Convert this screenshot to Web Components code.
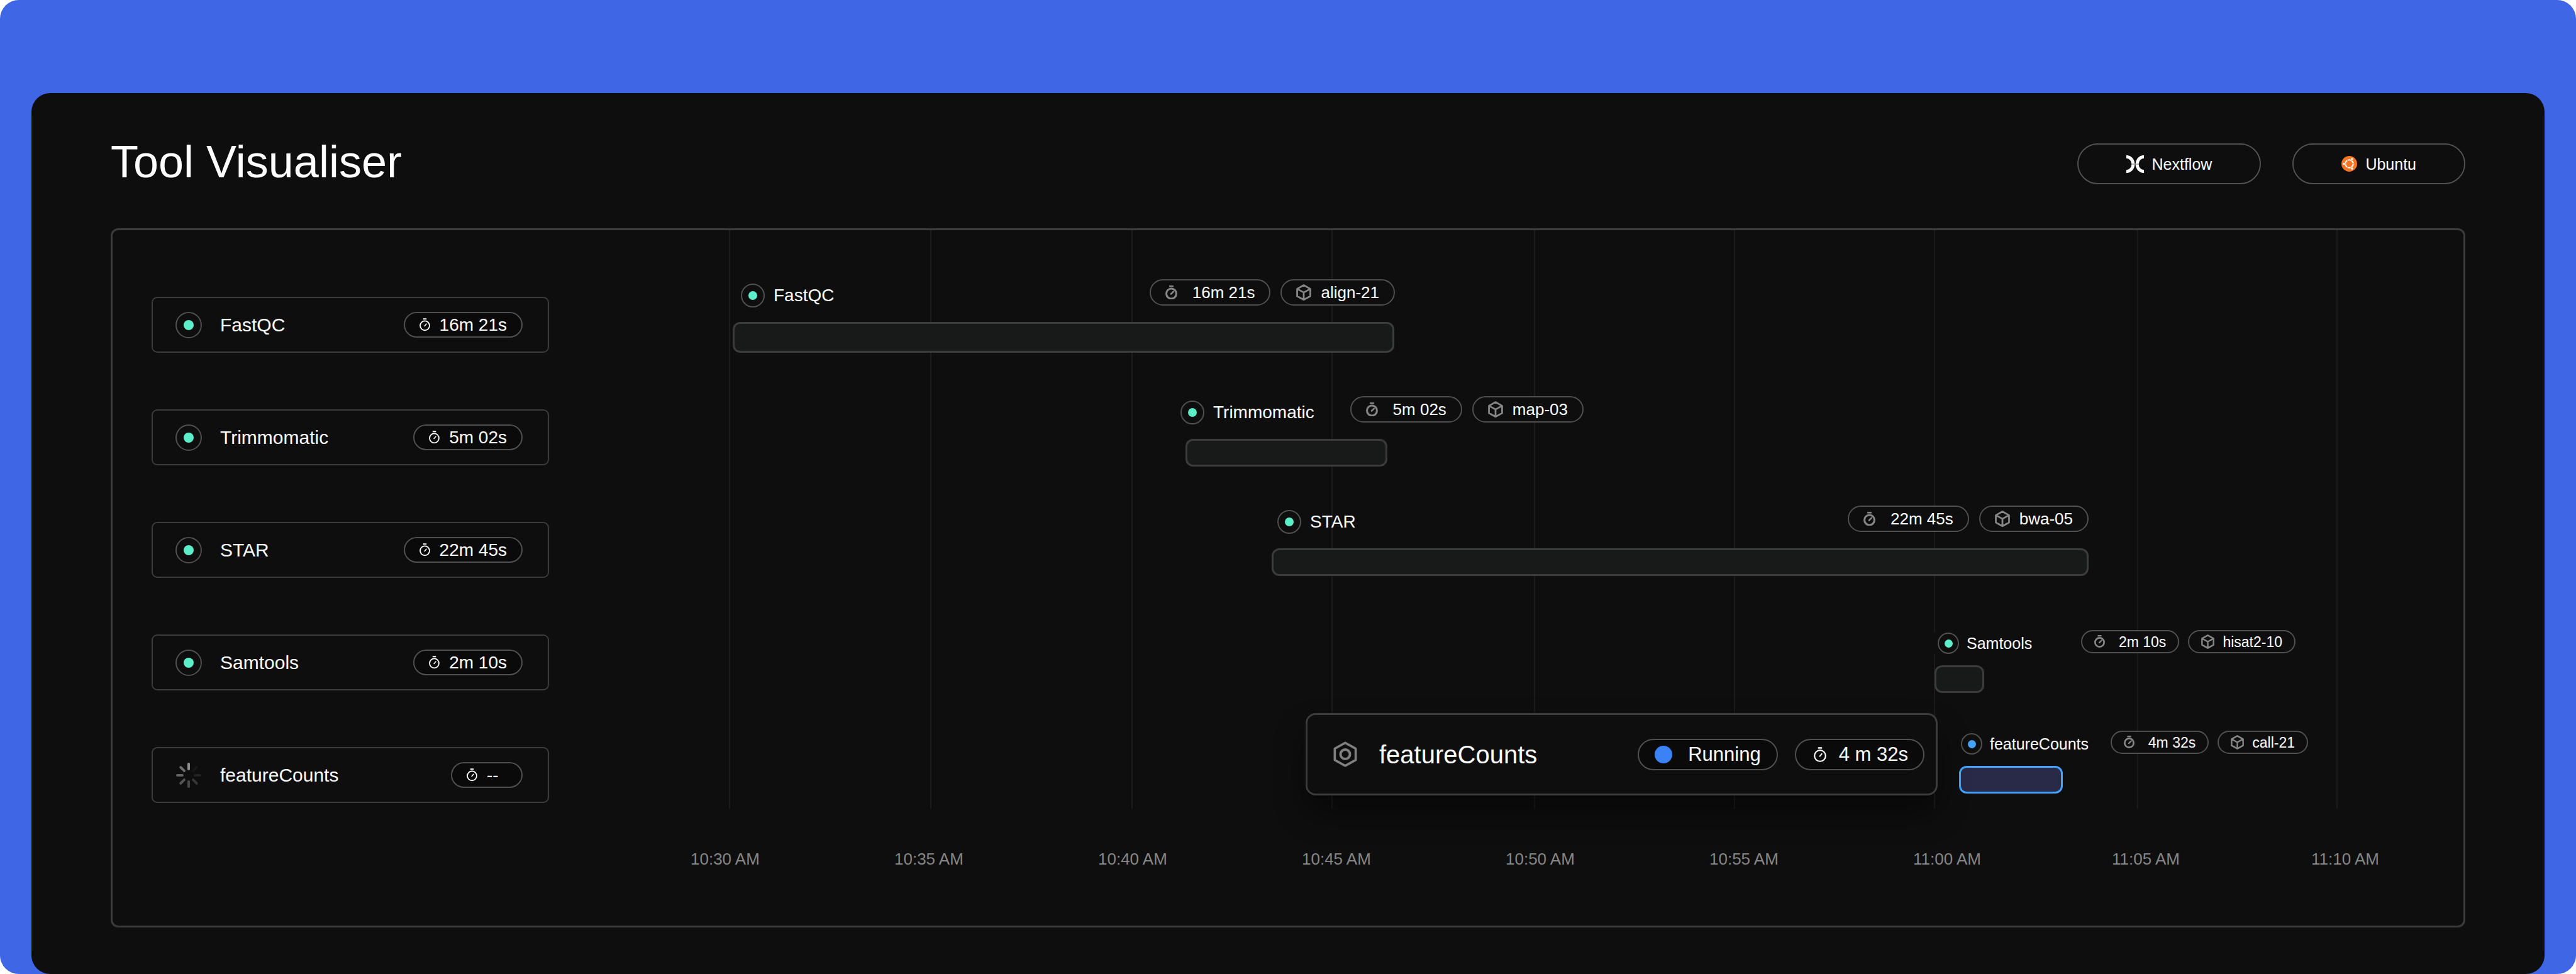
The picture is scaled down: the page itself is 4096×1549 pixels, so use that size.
<!DOCTYPE html>
<html lang="en">
<head>
<meta charset="utf-8">
<title>Tool Visualiser</title>
<style>
  html { background: #fff; }
  body {
    margin: 0;
    min-height: 100vh;
    display: flex;
    font-family: "Liberation Sans", Arial, sans-serif;
    color: #fff;
    --surface: #0e0e0e;
    --line: #3c3c3c;
    --pill-line: #505050;
    --muted: #868686;
    --done: #5ceec8;
    --active: #45a3ff;
  }
</style>
</head>
<body>
<tool-visualiser></tool-visualiser>

<script>
const define = (name, html, setup) => {
  const template = document.createElement('template');
  template.innerHTML = '<style>*{box-sizing:border-box}svg{display:block;flex:none}</style>' + html;
  customElements.define(name, class extends HTMLElement {
    constructor() {
      super();
      this.attachShadow({ mode: 'open' }).append(template.content.cloneNode(true));
    }
    connectedCallback() {
      if (setup) setup(this, this.shadowRoot);
    }
  });
};

/* Icons */
const ICONS = {
  timer: `<svg viewBox="0 0 25 30" aria-hidden="true"><g fill="none" stroke="currentColor">
      <circle cx="12.5" cy="17" r="10.5" stroke-width="4"/>
      <path d="M11.8 17.8 17 12.6" stroke-width="3.4" stroke-linecap="round"/>
      <path d="M8 1.7h9" stroke-width="3.4"/></g></svg>`,
  'timer-thin': `<svg viewBox="0 0 25 30" aria-hidden="true"><g fill="none" stroke="currentColor">
      <circle cx="12.5" cy="17.4" r="11" stroke-width="2.6"/>
      <path d="M12 18.4 16 13.6" stroke-width="2.4" stroke-linecap="round"/>
      <path d="M8.5 1.8h8" stroke-width="3"/></g></svg>`,
  cube: `<svg viewBox="0 0 31 34" aria-hidden="true"><path d="M15.5 2 29 9.5v15L15.5 32 2 24.5v-15ZM2 9.5 15.5 17 29 9.5M15.5 17v15" fill="none" stroke="currentColor" stroke-width="3.6" stroke-linejoin="round"/></svg>`,
  nextflow: `<svg viewBox="0 0 36 36" aria-hidden="true"><g fill="none">
      <path d="M14 18h8" stroke="#777" stroke-width="2"/>
      <path d="M0 3A14 15 0 0 1 0 33M36 3A14 15 0 0 0 36 33" stroke="#fff" stroke-width="6.4"/>
      <path d="M10 18h16" stroke="#555" stroke-width="1"/></g></svg>`,
  ubuntu: `<svg viewBox="0 0 32 32" aria-hidden="true">
      <circle cx="16" cy="16" r="16" fill="#f77422"/>
      <circle cx="16" cy="16" r="8" fill="none" stroke="#fff" stroke-width="2.8"/>
      <g stroke="#f77422" stroke-width="1.2" fill="#fff">
        <path d="M22 16h4M13 10.8 11 7.3M13 21.2l-2 3.5"/>
        <circle cx="5.2" cy="16" r="2.9"/><circle cx="21.6" cy="6.4" r="2.9"/><circle cx="21.6" cy="25.6" r="2.9"/>
      </g></svg>`,
  nut: `<svg viewBox="0 0 48 52" aria-hidden="true"><g fill="none" stroke="currentColor">
      <path d="M24 3 45 14.5v23L24 49 3 37.5v-23Z" stroke-width="4.6" stroke-linejoin="round"/>
      <circle cx="24" cy="26" r="9.5" stroke-width="5"/></g></svg>`
};

define('ui-icon', `
<style>
  :host { display: block; flex: none; }
  svg { width: 100%; height: auto; }
</style>`, (el, root) => {
  const name = el.getAttribute('name');
  if (name && !root.querySelector('svg')) root.append(document.createRange().createContextualFragment(ICONS[name]));
});

/* Ringed dot, or a spinner while a tool is pending */
define('status-mark', `
<style>
  :host { display: block; flex: none; width: var(--mark, 42px); height: var(--mark, 42px); }
  .ring { width: 100%; height: 100%; border: 2px solid var(--pill-line); border-radius: 50%; display: grid; place-items: center; background: var(--surface); }
  .ring::before { content: ""; width: var(--dot, 16px); height: var(--dot, 16px); border-radius: 50%; background: var(--done); }
  :host([state="running"]) .ring::before { background: var(--active); }
  svg { display: none; width: 100%; height: 100%; }
  :host([state="pending"]) .ring { display: none; }
  :host([state="pending"]) svg { display: block; }
</style>
<div class="ring"></div>
<svg viewBox="-21 -21 42 42" aria-hidden="true"><g stroke-width="4" stroke-linecap="round">
  <path d="M0-10V-18" stroke="#8f8f8f"/>
  <path d="M0-10V-18" stroke="#181818" transform="rotate(45)"/>
  <path d="M0-10V-18" stroke="#222" transform="rotate(90)"/>
  <path d="M0-10V-18" stroke="#363636" transform="rotate(135)"/>
  <path d="M0-10V-18" stroke="#484848" transform="rotate(180)"/>
  <path d="M0-10V-18" stroke="#555" transform="rotate(225)"/>
  <path d="M0-10V-18" stroke="#606060" transform="rotate(270)"/>
  <path d="M0-10V-18" stroke="#6e6e6e" transform="rotate(315)"/>
</g></svg>`);

/* Header action */
define('pill-button', `
<style>
  :host { display: block; }
  button {
    display: flex; align-items: center; gap: 13px; height: 65px; padding: 0 76px;
    border: 2px solid var(--pill-line); border-radius: 33px; background: none;
    color: inherit; font: 25px/32px "Liberation Sans", Arial, sans-serif; cursor: pointer;
  }
  ui-icon { width: var(--icon, 28px); }
</style>
<button type="button"><span><slot></slot></span></button>`, (el, root) => {
  const icon = document.createElement('ui-icon');
  icon.setAttribute('name', el.getAttribute('icon'));
  root.querySelector('button').prepend(icon);
});

/* Metadata chip */
define('meta-chip', `
<style>
  :host {
    display: flex; align-items: center; height: 42px; padding: 0 23px;
    border: 2px solid var(--pill-line); border-radius: 26px; background: var(--surface);
    font-size: 26px; line-height: 32px; white-space: nowrap; gap: 15px; box-sizing: border-box;
  }
  ui-icon { width: 24px; color: var(--muted); }
  :host([icon="timer"]) { gap: 24px; }
  :host([icon="timer"]) ui-icon { width: 19px; }
  :host([size="small"]) { height: 37px; padding: 0 19px; font-size: 23px; gap: 13px; }
  :host([size="small"]) ui-icon { width: 21px; }
  :host([size="small"][icon="timer"]) { gap: 22px; }
  :host([size="small"][icon="timer"]) ui-icon { width: 17px; }
  :host([size="card"]) { height: 41px; font-size: 28px; min-width: 114px; background: #0a0a0a; }
  :host([size="card"]) ui-icon { width: 17px; color: #fff; }
  :host([size="large"]) { height: 50px; padding: 0 24px 0 28px; font-size: 31px; gap: 20px; background: #0a0a0a; }
  :host([size="large"]) ui-icon { width: 20px; color: #fff; }
  .dot { width: 28px; height: 28px; border-radius: 50%; background: #3b82f6; }
  :host([size="large"][icon="dot"]) { padding: 0 25px; gap: 25px; }
</style>
<slot></slot>`, (el, root) => {
  const name = el.getAttribute('icon');
  let mark;
  if (name === 'dot') {
    mark = document.createElement('span');
    mark.className = 'dot';
  } else {
    mark = document.createElement('ui-icon');
    mark.setAttribute('name', name);
  }
  root.querySelector('slot').before(mark);
});

/* Tool summary in the side list */
define('tool-card', `
<style>
  :host {
    display: flex; align-items: center; height: 89px; padding: 0 40px 0 36px;
    border: 2px solid var(--line); border-radius: 9px; font-size: 30px; line-height: 36px; box-sizing: border-box;
  }
  .name { flex: 1; margin-left: 29px; }
</style>
<slot name="mark"></slot><span class="name"><slot></slot></span><slot name="time"></slot>`);

/* One run on the timeline; positions are in timeline units */
define('tool-run', `
<style>
  :host { display: block; --mark: 38px; --dot: 14px; }
  .head {
    display: flex; align-items: flex-start; justify-content: space-between;
    width: calc(var(--meta-end) * 100% / var(--span)); padding-left: calc(var(--label) * 100% / var(--span));
  }
  .name { display: flex; align-items: center; gap: 14px; margin-top: 7px; font-size: 28px; line-height: 32px; }
  .meta { display: flex; gap: 16px; }
  .bar {
    height: var(--bar, 44px); margin-top: 23px; border: 3px solid var(--line); border-radius: 12px; background: #181a19;
    margin-left: calc(var(--start) * 100% / var(--span)); width: calc((var(--end) - var(--start)) * 100% / var(--span));
  }
  :host([compact]) { --mark: 34px; --dot: 13px; }
  :host([compact]) .name { margin: 4px 0 0 -6px; padding-left: 6px; gap: 12px; font-size: 25px; background: var(--surface); }
  :host([compact]) .meta { gap: 14px; }
  :host([compact]) .bar { margin-top: 18px; }
  :host([state="running"]) .bar { border-color: var(--active); background: #282a47; }
</style>
<div class="head">
  <div class="name"><status-mark></status-mark><span><slot></slot></span></div>
  <div class="meta"><slot name="meta"></slot></div>
</div>
<div class="bar"></div>`, (el, root) => {
  for (const key of ['start', 'end', 'label', 'meta-end']) el.style.setProperty('--' + key, el.getAttribute(key));
  if (el.hasAttribute('state')) root.querySelector('status-mark').setAttribute('state', el.getAttribute('state'));
});

/* Floating detail of the active tool */
define('run-popover', `
<style>
  :host {
    display: flex; align-items: center; height: 131px; padding: 0 18px 0 41px; box-sizing: border-box;
    border: 3px solid var(--line); border-radius: 16px; background: var(--surface);
    box-shadow: 0 28px 48px rgba(0, 0, 0, .45);
  }
  ui-icon { width: 38px; color: #808080; }
  .name { flex: 1; margin-left: 35px; font-size: 40px; line-height: 48px; }
  .meta { display: flex; gap: 27px; }
</style>
<ui-icon name="nut"></ui-icon><span class="name"><slot></slot></span><div class="meta"><slot name="meta"></slot></div>`);

define('time-line', `
<style>
  :host { display: block; position: relative; --span: 2819; }
  .plot { display: grid; height: 920px; }
  .lines, .runs { grid-area: 1 / 1; display: grid; }
  .lines { grid-template-columns: 61fr 320fr 320fr 318fr 322fr 318fr 318fr 323fr 317fr 202fr; }
  .lines i + i { border-left: 2px solid #1c1c1c; }
  .runs { padding-top: 78px; grid-template-rows: 186px 174px 198px 160px auto; }
  .axis {
    display: grid; grid-template-columns: repeat(6, 324fr) 316fr 317fr 242fr; margin-top: 65px;
    font-size: 26px; line-height: 30px; color: #868686;
  }
  .axis span { white-space: nowrap; }
  run-popover { position: absolute; top: 768px; left: calc(978 * 100% / var(--span)); width: calc(1005 * 100% / var(--span)); }
</style>
<div class="plot">
  <div class="lines"><i></i><i></i><i></i><i></i><i></i><i></i><i></i><i></i><i></i><i></i></div>
  <div class="runs">
    <tool-run start="67" end="1119" label="80" meta-end="1120" style="--bar: 49px">FastQC
      <meta-chip slot="meta" icon="timer">16m 21s</meta-chip><meta-chip slot="meta" icon="cube">align-21</meta-chip></tool-run>
    <tool-run start="787" end="1108" label="779" meta-end="1420">Trimmomatic
      <meta-chip slot="meta" icon="timer">5m 02s</meta-chip><meta-chip slot="meta" icon="cube">map-03</meta-chip></tool-run>
    <tool-run start="924" end="2223" label="933" meta-end="2223">STAR
      <meta-chip slot="meta" icon="timer">22m 45s</meta-chip><meta-chip slot="meta" icon="cube">bwa-05</meta-chip></tool-run>
    <tool-run compact start="1978" end="2057" label="1983" meta-end="2552">Samtools
      <meta-chip slot="meta" size="small" icon="timer">2m 10s</meta-chip><meta-chip slot="meta" size="small" icon="cube">hisat2-10</meta-chip></tool-run>
    <tool-run compact state="running" start="2017" end="2182" label="2020" meta-end="2572">featureCounts
      <meta-chip slot="meta" size="small" icon="timer">4m 32s</meta-chip><meta-chip slot="meta" size="small" icon="cube">call-21</meta-chip></tool-run>
  </div>
</div>
<div class="axis">
  <span>10:30 AM</span><span>10:35 AM</span><span>10:40 AM</span><span>10:45 AM</span><span>10:50 AM</span>
  <span>10:55 AM</span><span>11:00 AM</span><span>11:05 AM</span><span>11:10 AM</span>
</div>
<run-popover>featureCounts
  <meta-chip slot="meta" size="large" icon="dot">Running</meta-chip>
  <meta-chip slot="meta" size="large" icon="timer-thin">4 m 32s</meta-chip>
</run-popover>`);

define('tool-list', `
<style>
  :host { display: flex; flex-direction: column; gap: 90px; }
</style>
<tool-card><status-mark slot="mark"></status-mark>FastQC<meta-chip slot="time" size="card" icon="timer-thin">16m 21s</meta-chip></tool-card>
<tool-card><status-mark slot="mark"></status-mark>Trimmomatic<meta-chip slot="time" size="card" icon="timer-thin">5m 02s</meta-chip></tool-card>
<tool-card><status-mark slot="mark"></status-mark>STAR<meta-chip slot="time" size="card" icon="timer-thin">22m 45s</meta-chip></tool-card>
<tool-card><status-mark slot="mark"></status-mark>Samtools<meta-chip slot="time" size="card" icon="timer-thin">2m 10s</meta-chip></tool-card>
<tool-card><status-mark slot="mark" state="pending"></status-mark>featureCounts<meta-chip slot="time" size="card" icon="timer-thin">--</meta-chip></tool-card>`);

define('tool-visualiser', `
<style>
  :host { flex: 1; display: flex; padding: 148px 50px 0; border-radius: 30px; background: #3e66e5; box-sizing: border-box; min-width: 0; }
  main { flex: 1; min-width: 0; padding: 73px 126px 74px; border-radius: 30px; background: var(--surface); }
  header { display: flex; align-items: flex-end; justify-content: space-between; margin-bottom: 70px; }
  h1 { margin: 0; font-size: 72px; line-height: 72px; font-weight: 400; }
  nav { display: flex; gap: 50px; }
  section { display: flex; border: 3px solid var(--line); border-radius: 12px; padding: 0 0 91px 62px; }
  tool-list { flex: none; width: 632px; margin: 106px 225px 0 0; }
  time-line { flex: 1; min-width: 0; }
</style>
<main>
  <header>
    <h1>Tool Visualiser</h1>
    <nav>
      <pill-button icon="nextflow">Nextflow</pill-button>
      <pill-button icon="ubuntu" style="--icon: 25px">Ubuntu</pill-button>
    </nav>
  </header>
  <section><tool-list></tool-list><time-line></time-line></section>
</main>`);
</script>
</body>
</html>
